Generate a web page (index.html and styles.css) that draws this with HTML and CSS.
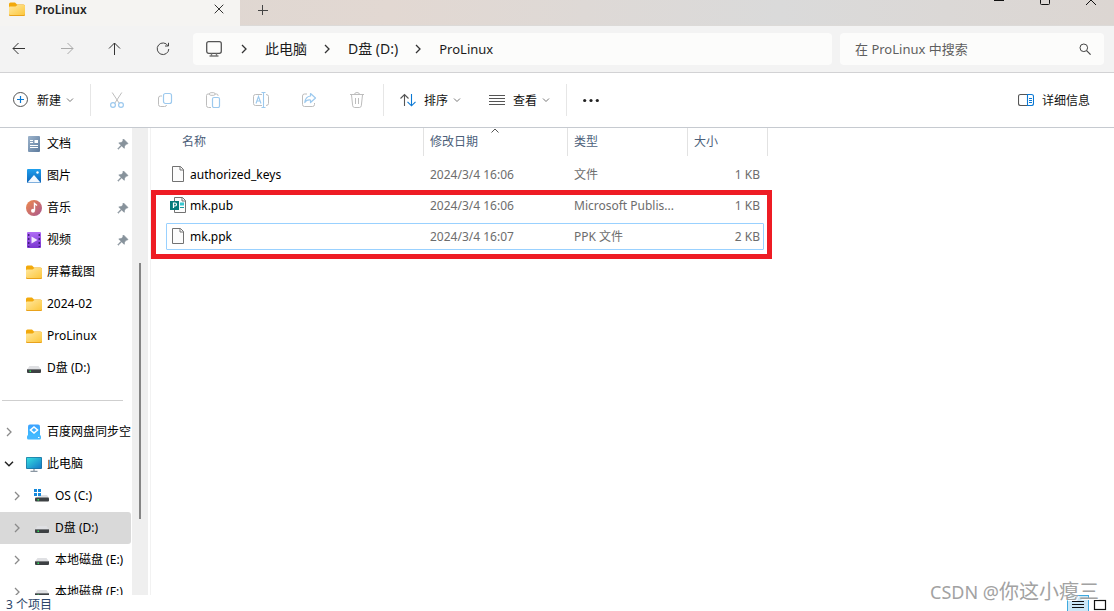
FILE: index.html
```html
<!DOCTYPE html>
<html lang="zh-CN">
<head>
<meta charset="utf-8">
<meta name="viewport" content="width=device-width, initial-scale=1">
<title>ProLinux</title>
<link rel="stylesheet" href="styles.css">
</head>
<body>
<svg class="defs" aria-hidden="true">
  <defs>
    <linearGradient id="g-folder" x1="0" y1="0" x2="1" y2="1"><stop offset="0" stop-color="#ffe8a0"/><stop offset="1" stop-color="#fcc63a"/></linearGradient>
    <linearGradient id="g-doc" x1="0" y1="0" x2="1" y2="1"><stop offset="0" stop-color="#9db4cc"/><stop offset="1" stop-color="#5c7a9c"/></linearGradient>
    <linearGradient id="g-pic" x1="0" y1="0" x2="0" y2="1"><stop offset="0" stop-color="#1fa0ee"/><stop offset="1" stop-color="#0c63b8"/></linearGradient>
    <linearGradient id="g-music" x1="0" y1="0" x2="1" y2="1"><stop offset="0" stop-color="#f08c4c"/><stop offset="1" stop-color="#a8558f"/></linearGradient>
    <linearGradient id="g-video" x1="0" y1="0" x2="0" y2="1"><stop offset="0" stop-color="#b06cf5"/><stop offset="1" stop-color="#7a35d0"/></linearGradient>
    <linearGradient id="g-cloud" x1="0" y1="0" x2="0" y2="1"><stop offset="0" stop-color="#3da2ff"/><stop offset="1" stop-color="#3fc0ff"/></linearGradient>
    <linearGradient id="g-pc" x1="0" y1="0" x2="1" y2="1"><stop offset="0" stop-color="#35dfe0"/><stop offset="1" stop-color="#1478c8"/></linearGradient>
    <symbol id="folder" viewBox="0 0 16 16">
      <path d="M0 3q0-1.500 1.500-1.500H6L8 3.500h6.500Q16 3.500 16 5v5H0z" fill="#f2a90c"/>
      <path d="M0 6.500Q0 5.500 1 5.500h5.500L8.500 4H15q1 0 1 1v8.500q0 1-1 1H1q-1 0-1-1z" fill="url(#g-folder)"/>
      <path d="M0 13.500q0 1 1 1h14q1 0 1-1" fill="none" stroke="#e9a21b"/>
    </symbol>
    <symbol id="drive" viewBox="0 0 16 16">
      <path d="M3.500 6h9L15 9.500H1z" fill="#dfe0e3"/>
      <rect x="1" y="9" width="14" height="4" rx="1" fill="#3d4043"/>
      <rect x="1" y="9" width="14" height="1" fill="#77797c"/>
      <rect x="3.500" y="10.500" width="1.500" height="1.500" fill="#2be35a"/>
    </symbol>
    <symbol id="pin" viewBox="0 0 12 12">
      <path d="M6.500 1 11 5.500 9.800 6.200 9.200 6 7.500 8.200 7.300 10.300 4.600 7.900 1.200 11.200.800 10.800 4 7.300 1.800 4.900 4.200 4.600 6.100 2.900 5.800 1.900z" fill="#87929b" stroke="#87929b" stroke-width=".7" stroke-linejoin="round"/>
    </symbol>
    <symbol id="right" viewBox="0 0 6 10"><path d="M1 1l4 4-4 4" fill="none" stroke="currentColor" stroke-width="1.300"/></symbol>
    <symbol id="down" viewBox="0 0 8 6"><path d="M1 1.500l3 3 3-3" fill="none" stroke="currentColor"/></symbol>
    <symbol id="file" viewBox="0 0 16 16">
      <path d="M2.500.500h8l3 3v12h-11z" fill="#fcfcfc" stroke="#727272"/>
      <path d="M10 .500V4h3.500" fill="none" stroke="#727272"/>
    </symbol>
  </defs>
</svg>

<header class="titlebar">
  <div class="tab">
    <svg class="i16"><use href="#folder"/></svg>
    <span class="tab-title">ProLinux</span>
    <button class="plain tab-close" aria-label="关闭标签页"><svg class="i10" viewBox="0 0 10 10"><path d="M.7.700l8.600 8.600M9.300.700L.700 9.300" fill="none" stroke="#333"/></svg></button>
  </div>
  <button class="plain tab-add" aria-label="新建标签页"><svg class="i10" viewBox="0 0 10 10"><path d="M4.500 0v10M0 5.500h10" fill="none" stroke="#444"/></svg></button>
  <div class="window-buttons">
    <button class="plain" aria-label="最小化"><svg class="win-icon" viewBox="0 5 10 5"><path d="M0 5.500h10" stroke="#111"/></svg></button>
    <button class="plain" aria-label="最大化"><svg class="win-icon" viewBox="0 5 10 5"><rect x=".500" y=".500" width="9" height="9" rx="1" fill="none" stroke="#111"/></svg></button>
    <button class="plain" aria-label="关闭"><svg class="win-icon" viewBox="0 5 10 5"><path d="M0 0l10 10M10 0L0 10" stroke="#111"/></svg></button>
  </div>
</header>

<nav class="navbar">
  <div class="nav-buttons">
    <button class="plain" aria-label="后退"><svg class="i14" viewBox="0 0 14 14"><path d="M13 6.500H1M6.500 1L1 6.500l5.500 5.500" fill="none" stroke="#333"/></svg></button>
    <button class="plain" aria-label="前进" disabled><svg class="i14" viewBox="0 0 14 14"><path d="M1 6.500h12M7.500 1L13 6.500l-5.500 5.500" fill="none" stroke="#aaa"/></svg></button>
    <button class="plain" aria-label="向上"><svg class="i14" viewBox="0 0 14 14"><path d="M6.500 13V1M1 6.500L6.500 1l5.500 5.500" fill="none" stroke="#333"/></svg></button>
    <button class="plain" aria-label="刷新"><svg class="i14" viewBox="0 0 14 14"><path d="M12 3.800A5.800 5.800 0 1 0 12.800 7M12.500.800V4H9" fill="none" stroke="#444"/></svg></button>
  </div>
  <div class="address">
    <svg class="i16 place" viewBox="0 0 16 16"><rect x=".700" y=".700" width="14.600" height="11.600" rx="2" fill="none" stroke="#555" stroke-width="1.300"/><path d="M5.500 12.500v2.500M10.500 12.500v2.500M3.500 15h9" stroke="#777" stroke-width="1.400"/></svg>
    <svg class="crumb-arrow"><use href="#right"/></svg>
    <a class="crumb" href="#pc">此电脑</a>
    <svg class="crumb-arrow"><use href="#right"/></svg>
    <a class="crumb" href="#d">D盘 (D:)</a>
    <svg class="crumb-arrow"><use href="#right"/></svg>
    <a class="crumb current" href="#prolinux">ProLinux</a>
  </div>
  <div class="search">
    <input type="search" aria-label="搜索" placeholder="在 ProLinux 中搜索">
    <svg class="i12" viewBox="0 0 12 12"><circle cx="4.800" cy="4.800" r="3.800" fill="none" stroke="#444"/><path d="M7.600 7.600l4 4" stroke="#444" stroke-width="1.200"/></svg>
  </div>
</nav>

<div class="toolbar">
  <button class="plain tool">
    <svg class="i16" viewBox="0 0 16 16"><circle cx="7.500" cy="7.500" r="7" fill="none" stroke="#555"/><path d="M7.500 4v7M4 7.500h7" stroke="#0a78d4" stroke-width="1.200"/></svg>
    <span>新建</span><svg class="down"><use href="#down"/></svg>
  </button>
  <div class="tool-group">
    <button class="plain" aria-label="剪切" disabled><svg class="i16" viewBox="0 0 16 16"><path d="M3.200.500l7.200 11M12.800.500l-7.200 11" fill="none" stroke="#bdbdbd"/><circle cx="4" cy="13" r="2.400" fill="none" stroke="#9cc9ee" stroke-width="1.200"/><circle cx="12" cy="13" r="2.400" fill="none" stroke="#9cc9ee" stroke-width="1.200"/></svg></button>
    <button class="plain" aria-label="复制" disabled><svg class="i16" viewBox="0 0 16 16"><path d="M5 4H3.500q-2 0-2 2v6.500q0 2 2 2h4q2 0 2-1.500" fill="none" stroke="#bdbdbd"/><rect x="6.500" y="1.500" width="8" height="10" rx="2" fill="none" stroke="#9cc9ee" stroke-width="1.200"/></svg></button>
    <button class="plain" aria-label="粘贴" disabled><svg class="i16" viewBox="0 0 16 16"><path d="M6 15.500H3.500q-2 0-2-2v-10q0-1.500 1.500-1.500h8.500q1.500 0 1.500 1.500V4" fill="none" stroke="#bdbdbd"/><rect x="4.500" y=".700" width="5.500" height="2.600" rx="1.200" fill="#fff" stroke="#bdbdbd"/><rect x="7.500" y="5.500" width="7" height="10" rx="1.500" fill="#fff" stroke="#9cc9ee" stroke-width="1.200"/></svg></button>
    <button class="plain" aria-label="重命名" disabled><svg class="i16" viewBox="0 0 16 16"><path d="M9 2.500H2.500q-2 0-2 2v7q0 2 2 2H9M13 2.500q2.500 0 2.500 2v7q0 2-2.500 2" fill="none" stroke="#bdbdbd"/><path d="M10.500.500v15M8.500.500h4M8.500 15.500h4M3 11.500L5.500 4.500 8 11.500M4 9h3.500" fill="none" stroke="#9cc9ee" stroke-width="1.100"/></svg></button>
    <button class="plain" aria-label="共享" disabled><svg class="i16" viewBox="0 0 16 16"><path d="M6 2H3.500q-2 0-2 2v8.500q0 2 2 2h8q2 0 2-2V11" fill="none" stroke="#bdbdbd"/><path d="M9.500 1.500l5 4.500-5 4.500V8Q5.500 7.500 3.800 10.500 4.500 4.500 9.500 4z" fill="none" stroke="#9cc9ee" stroke-linejoin="round" stroke-width="1.200"/></svg></button>
    <button class="plain" aria-label="删除" disabled><svg class="i16" viewBox="0 0 16 16"><path d="M1 2.500h14M5.500 2.500q0-2 2.500-2t2.500 2M2.500 3l1.200 10.800q.2 1.700 2 1.700h4.600q1.800 0 2-1.700L13.500 3M6.500 6v6M9.500 6v6" fill="none" stroke="#bdbdbd"/></svg></button>
  </div>
  <button class="plain tool">
    <svg class="i16" viewBox="0 0 16 16"><path d="M4.500 14V2.500M.500 6.500l4-4 4 4" fill="none" stroke="#555" stroke-width="1.100"/><path d="M11.500 2v11.500M7.500 9.800l4 4 4-4" fill="none" stroke="#0a78d4" stroke-width="1.100"/></svg>
    <span>排序</span><svg class="down"><use href="#down"/></svg>
  </button>
  <button class="plain tool view">
    <svg class="i16" viewBox="0 0 16 16"><path d="M0 3.500h16M0 6.500h16M0 9.500h16M0 12.500h16" stroke="#555"/></svg>
    <span>查看</span><svg class="down"><use href="#down"/></svg>
  </button>
  <button class="plain more" aria-label="更多"><svg class="i16" viewBox="0 0 16 16"><circle cx="1.700" cy="8.500" r="1.600" fill="#222"/><circle cx="8" cy="8.500" r="1.600" fill="#222"/><circle cx="14.300" cy="8.500" r="1.600" fill="#222"/></svg></button>
  <button class="plain tool details">
    <svg class="i16" viewBox="0 0 16 16"><path d="M9.500 2.500H2.500q-2 0-2 2v7q0 2 2 2h7" fill="none" stroke="#555" stroke-width="1.100"/><path d="M9.500 2.500h4q2 0 2 2v7q0 2-2 2h-4zM11 6.500h3M11 8.500h3M11 10.500h3" fill="none" stroke="#0a78d4" stroke-width="1.100"/></svg>
    <span>详细信息</span>
  </button>
</div>

<main class="content">
  <div class="sidebar">
    <ul class="tree">
      <li class="item"><svg class="i16" viewBox="0 0 16 16"><rect x="2" width="12" height="16" rx="1" fill="url(#g-doc)"/><path d="M4 4.500h3M4 6.500h3M4 9.500h8M4 11.500h8" stroke="#fff"/><path d="M8.500 4h3.500v3h-3.500z" fill="#fff"/></svg><span>文档</span><svg class="pin"><use href="#pin"/></svg></li>
      <li class="item"><svg class="i16" viewBox="0 0 16 16"><rect x="1" y="1" width="14" height="14" rx="1" fill="url(#g-pic)"/><path d="M1.500 14.500L8 7l6.500 7.500z" fill="#f3f9ff"/><circle cx="11.500" cy="4.500" r="1.200" fill="#fff"/></svg><span>图片</span><svg class="pin"><use href="#pin"/></svg></li>
      <li class="item"><svg class="i16" viewBox="0 0 16 16"><circle cx="8" cy="8" r="8" fill="url(#g-music)"/><path d="M8.500 10.500V3.500l2.500 2" fill="none" stroke="#fff" stroke-width="1.400"/><circle cx="7" cy="10.700" r="2" fill="#fff"/></svg><span>音乐</span><svg class="pin"><use href="#pin"/></svg></li>
      <li class="item"><svg class="i16" viewBox="0 0 16 16"><rect x="1" width="14" height="16" rx="1" fill="url(#g-video)"/><path d="M2.700 2v13M13.300 2v13" stroke="#43207d" stroke-width="1.500" stroke-dasharray="2 2"/><path d="M5.500 4.500l6 3.500-6 3.500z" fill="#f2e8ff"/></svg><span>视频</span><svg class="pin"><use href="#pin"/></svg></li>
      <li class="item"><svg class="i16"><use href="#folder"/></svg><span>屏幕截图</span></li>
      <li class="item"><svg class="i16"><use href="#folder"/></svg><span>2024-02</span></li>
      <li class="item"><svg class="i16"><use href="#folder"/></svg><span>ProLinux</span></li>
      <li class="item"><svg class="i16"><use href="#drive"/></svg><span>D盘 (D:)</span></li>
      <li class="rule"></li>
      <li class="item node"><svg class="arrow"><use href="#right"/></svg><svg class="i16" viewBox="0 0 16 16"><rect x="2" y=".500" width="12" height="13" rx="2" fill="url(#g-cloud)"/><rect x="1" y="11" width="14" height="4.500" rx="1.500" fill="#45b8ff"/><path d="M8 3l3.500 3L8 9 4.500 6z" fill="none" stroke="#fff" stroke-width="1.600"/><path d="M12 13.500h1.500" stroke="#fff"/></svg><span>百度网盘同步空</span></li>
      <li class="item node open"><svg class="arrow-down" viewBox="0 0 10 6"><path d="M1 .800l4 4 4-4" fill="none" stroke="currentColor" stroke-width="1.500"/></svg><svg class="i16" viewBox="0 0 16 16"><rect y="1" width="16" height="12" rx="1" fill="#1b6f9d"/><rect x=".700" y="1.700" width="14.600" height="10.600" fill="url(#g-pc)"/><path d="M8 13v2M4.500 15.300h7" stroke="#8a97a3" stroke-width="1.300"/></svg><span>此电脑</span></li>
      <li class="item node deep"><svg class="arrow"><use href="#right"/></svg><svg class="i16" viewBox="0 0 16 16"><path d="M7 7h6l2 3H2z" fill="#dfe0e3"/><rect x="1" y="9.500" width="14" height="4" rx="1" fill="#3d4043"/><rect x="3.500" y="11" width="1.500" height="1.500" fill="#2be35a"/><path d="M0 1h3v3H0zM4 1h3v3H4zM0 5h3v3H0zM4 5h3v3H4z" fill="#1389dc"/></svg><span>OS (C:)</span></li>
      <li class="item node deep selected"><svg class="arrow"><use href="#right"/></svg><svg class="i16"><use href="#drive"/></svg><span>D盘 (D:)</span></li>
      <li class="item node deep"><svg class="arrow"><use href="#right"/></svg><svg class="i16"><use href="#drive"/></svg><span>本地磁盘 (E:)</span></li>
      <li class="item node deep"><svg class="arrow"><use href="#right"/></svg><svg class="i16"><use href="#drive"/></svg><span>本地磁盘 (F:)</span></li>
    </ul>
    <div class="scrollbar"><div class="thumb"></div></div>
  </div>
  <section class="files">
    <div class="list">
      <table class="table">
        <colgroup><col class="c-name"><col class="c-date"><col class="c-type"><col class="c-size"></colgroup>
        <thead>
          <tr>
            <th><div class="head first">名称</div></th>
            <th><div class="head">修改日期<svg class="sort" viewBox="0 0 8 5"><path d="M.500 4.500L4 1l3.500 3.500" fill="none" stroke="#555"/></svg></div></th>
            <th><div class="head">类型</div></th>
            <th><div class="head">大小</div></th>
          </tr>
        </thead>
        <tbody>
          <tr><td><div class="name"><svg class="i16"><use href="#file"/></svg>authorized_keys</div></td><td>2024/3/4 16:06</td><td>文件</td><td class="size">1 KB</td></tr>
          <tr><td><div class="name"><svg class="i16" viewBox="0 0 16 16"><path d="M4.500.500h8l3 3v12h-11z" fill="#fcfcfc" stroke="#727272"/><path d="M12 .500V4h3.500" fill="none" stroke="#727272"/><path d="M10 5.500h4v3h-4z" fill="#37c6d0"/><path d="M10 10.500h4" stroke="#1a9ba1"/><rect y="4" width="9" height="9" fill="#077b7c"/><path d="M3.500 11V6h1.500q1.500 0 1.500 1.500T5 9H3.500" fill="none" stroke="#fff" stroke-width="1.200"/></svg>mk.pub</div></td><td>2024/3/4 16:06</td><td>Microsoft Publis...</td><td class="size">1 KB</td></tr>
          <tr class="focused"><td><div class="name"><svg class="i16"><use href="#file"/></svg>mk.ppk</div></td><td>2024/3/4 16:07</td><td>PPK 文件</td><td class="size">2 KB</td></tr>
        </tbody>
      </table>
      <div class="mark"></div>
    </div>
  </section>
</main>

<footer class="status">
  <span class="count">3 个项目</span>
  <div class="layouts">
    <button class="plain layout on" aria-label="详细信息视图"><svg class="lay-icon" viewBox="0 0 14 12"><path d="M1 2.500h12M1 5.500h12M1 8.500h12" stroke="#111"/></svg></button>
    <button class="plain layout" aria-label="大图标视图"><svg class="lay-icon" viewBox="0 0 14 12"><rect x="1.500" y="1.500" width="11" height="9" fill="#fff" stroke="#111" stroke-width="1.200"/></svg></button>
  </div>
</footer>
<div class="watermark"><span class="brand">CSDN @</span>你这小瘪三</div>
</body>
</html>
```

FILE: styles.css
```css
* { box-sizing: border-box; }

body {
  margin: 0;
  height: 100vh;
  display: flex;
  flex-direction: column;
  overflow: hidden;
  position: relative;
  background: #fff;
  color: #111;
  font: 12px/16px "Noto Sans", "Noto Sans CJK SC", sans-serif;
}

svg { display: block; flex: none; }
.defs { position: absolute; width: 0; height: 0; }
.i16 { width: 16px; height: 16px; }
.i14 { width: 14px; height: 14px; }
.i12 { width: 12px; height: 12px; }
.i10 { width: 10px; height: 10px; }

.plain {
  border: 0;
  padding: 0;
  background: none;
  font: inherit;
  color: inherit;
  display: flex;
  align-items: center;
  justify-content: center;
}

/* Title bar */
.titlebar {
  flex: none;
  height: 26px;
  display: flex;
  background: linear-gradient(90deg, #dcd6d1, #e2d8d2 35%, #dadada 70%, #dcd6d2);
  border-bottom: 1px solid #dcdad8;
}
.tab {
  width: 240px;
  height: 26px;
  display: flex;
  align-items: center;
  padding: 0 16px 8px 9px;
  background: #f5f4f2;
}
.tab-title { margin-left: 10px; padding-top: 2px; font-weight: 600; color: #222; }
.tab-close { margin-left: auto; width: 10px; height: 10px; }
.tab-add { width: 46px; height: 20px; }
.window-buttons { margin-left: auto; display: flex; align-items: flex-start; }
.window-buttons .plain { width: 46px; }
.win-icon { width: 10px; height: 5px; }

/* Navigation bar */
.navbar {
  flex: none;
  height: 47px;
  display: flex;
  align-items: center;
  padding: 0 10px 0 3px;
  background: #f3f3f3;
  border-bottom: 1px solid #d2d2d4;
}
.nav-buttons { display: flex; gap: 16px; margin-right: 14px; }
.nav-buttons .plain { width: 32px; height: 32px; }
.address, .search {
  height: 32px;
  display: flex;
  align-items: center;
  border-radius: 4px;
  background: #fcfcfb;
}
.address { flex: 1; padding-left: 13px; margin-right: 8px; }
.place { margin-right: 2px; }
.crumb-arrow { width: 6px; height: 10px; margin: 0 18px 0 17px; color: #333; }
.crumb { color: #1b1b1b; text-decoration: none; font-size: 14px; white-space: nowrap; }
.crumb.current { font-size: 13px; }
.search { width: 264px; padding: 0 13px 0 15px; }
.search input {
  flex: 1;
  min-width: 0;
  padding: 0;
  border: 0;
  outline: 0;
  background: none;
  font: inherit;
  font-size: 13px;
  color: #222;
}
.search input::placeholder { color: #5f5f5f; opacity: 1; }

/* Command bar */
.toolbar {
  flex: none;
  height: 55px;
  display: flex;
  align-items: center;
  padding: 0 24px 0 13px;
  border-bottom: 1px solid #c6cad0;
}
.tool { gap: 8px; }
.tool span { padding-top: 2px; }
.tool .down { margin-left: -3px; }
.down { width: 8px; height: 6px; color: #777; }
.tool-group {
  height: 32px;
  display: flex;
  align-items: center;
  gap: 16px;
  margin: 0 16px;
  padding: 0 10px;
  border: solid #e6e6e6;
  border-width: 0 1px;
}
.tool-group .plain { width: 32px; height: 32px; }
.view { margin-left: 28px; }
.more { height: 32px; margin-left: 16px; padding-left: 16px; border-left: 1px solid #e6e6e6; }
.details { margin-left: auto; }

/* Content */
.content { flex: 1; min-height: 0; display: flex; }
.sidebar { flex: none; width: 151px; display: flex; border-right: 1px solid #f2f2f2; }
.tree { width: 132px; margin: 0; padding: 0; list-style: none; overflow: hidden; }
.item {
  height: 32px;
  display: flex;
  align-items: center;
  padding: 0 3px 0 26px;
  gap: 5px;
  white-space: nowrap;
  color: #000;
}
.item .i16 { margin-bottom: 1px; }
.pin { width: 12px; height: 12px; margin-left: auto; }
.rule { height: 32px; padding: 16px 9px 0 2px; }
.rule::before { content: ""; display: block; height: 1px; background: #cfcfcf; }
.node { padding: 0 0 0 6px; }
.arrow { width: 6px; height: 10px; margin-right: 9px; color: #8a8a8a; }
.arrow-down { width: 10px; height: 6px; margin-right: 7px; color: #222; }
.open { padding-left: 4px; }
.deep { padding-left: 14px; }
.selected { margin-right: 1px; background: #d9d9d9; border-radius: 0 3px 3px 0; }
.scrollbar { width: 16px; background: #efefef; padding: 135px 7px 0; }
.thumb { width: 2px; height: 256px; background: #858585; }

.files { flex: 1; min-width: 0; padding-left: 15px; }
.list { position: relative; width: 602px; }
.table { table-layout: fixed; width: 602px; border-collapse: collapse; color: #6d6d6d; }
.c-name { width: 258px; }
.c-date { width: 144px; }
.c-type { width: 120px; }
.c-size { width: 80px; }
th { height: 31px; padding: 0; vertical-align: top; text-align: left; font-weight: 400; color: #4c607a; }
.head { position: relative; height: 28px; padding: 6px; border-right: 1px solid #e2e2e2; }
.head.first { padding-left: 16px; }
.sort { position: absolute; left: 67px; top: 0; width: 8px; height: 5px; }
td { height: 31px; padding: 0 0 0 6px; white-space: nowrap; }
td:first-child { padding-left: 4px; }
.name { display: flex; align-items: center; gap: 4px; color: #000; }
.name .i16 { margin-bottom: 1px; }
.size { text-align: right; padding-right: 8px; }
.focused { position: relative; }
.focused::after {
  content: "";
  position: absolute;
  inset: 2px 4px 2px 0;
  border: 1px solid #99d1ff;
  border-radius: 1px;
}
.mark {
  position: absolute;
  left: -15px;
  right: -4px;
  top: 62px;
  height: 69px;
  border: 5px solid #ee1c24;
}

/* Status bar */
.status {
  flex: none;
  height: 16px;
  display: flex;
  justify-content: space-between;
  padding: 0 4px 0 6px;
  color: #2b4468;
}
.count { padding-top: 4px; line-height: 12px; }
.layouts { display: flex; }
.layout { width: 21px; height: 16px; padding-top: 3px; }
.layout.on { width: 22px; background: #cce8f7; border: 1px solid #3fa9de; border-bottom: 0; }
.lay-icon { width: 14px; height: 12px; }

.watermark {
  position: absolute;
  right: 15px;
  bottom: 8px;
  font-size: 20px;
  line-height: 22px;
  color: #a2a2a2;
  text-shadow: 1px 1px 0 #fff;
  white-space: nowrap;
}
.brand { font-size: 18px; }
```
